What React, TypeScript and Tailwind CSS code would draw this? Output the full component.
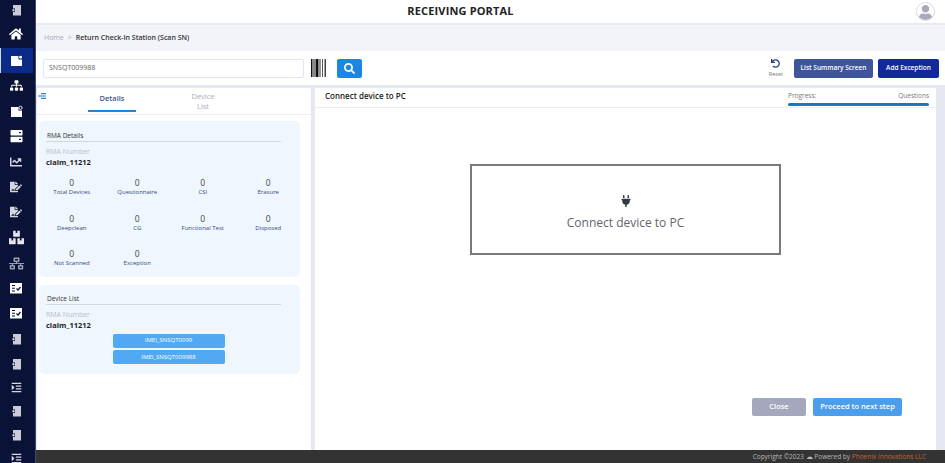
import type { ReactNode } from 'react'
import { FaHome, FaSitemap, FaChartLine, FaFileSignature, FaBoxes, FaSearch, FaUndo, FaPlug, FaIndent, FaUser, FaNetworkWired } from 'react-icons/fa'

function PanelIcon() {
  return (
    <svg width="14" height="14" viewBox="0 0 14 14">
      <rect x="4" y="2" width="8" height="10.5" fill="#c9cbd6" />
      <rect x="2.5" y="5.5" width="3.5" height="3.5" fill="#0a1238" />
      <rect x="3.5" y="6.3" width="2" height="2" fill="#e8e9ef" />
    </svg>
  )
}

function NoteIcon({ search }: { search?: boolean }) {
  return (
    <svg width="15" height="15" viewBox="0 0 15 15">
      <path d="M2 3h7.5v3.5H13V13H2z" fill="#fff" />
      {search ? (
        <circle cx="11.5" cy="3.8" r="1.6" fill="none" stroke="#fff" strokeWidth="0.9" />
      ) : (
        <circle cx="11.6" cy="4.2" r="1.4" fill="#fff" />
      )}
    </svg>
  )
}

function DrivesIcon() {
  return (
    <svg width="15" height="14" viewBox="0 0 15 14">
      <rect x="1.5" y="1" width="12" height="5.5" rx="0.8" fill="#fff" />
      <rect x="1.5" y="7.7" width="12" height="5.5" rx="0.8" fill="#fff" />
      <rect x="10" y="3" width="2" height="1.2" fill="#0a1238" />
      <rect x="10" y="9.8" width="2" height="1.2" fill="#0a1238" />
    </svg>
  )
}

function CheckListIcon() {
  return (
    <svg width="14" height="13" viewBox="0 0 14 13">
      <rect x="1" y="1" width="12" height="10.5" fill="#fff" />
      <path d="M3 3.5h3M3 6.2h3M3 9h3" stroke="#0a1238" strokeWidth="1.1" />
      <path d="M7.5 6.5l1.5 1.5 2.5-3" stroke="#0a1238" strokeWidth="1.2" fill="none" />
    </svg>
  )
}

function BarcodeIcon() {
  return (
    <svg width="16" height="18" viewBox="0 0 16 18" className="block">
      <rect x="0" y="0" width="1.5" height="18" fill="#111" />
      <rect x="2.5" y="0" width="1" height="18" fill="#111" />
      <rect x="4.5" y="0" width="3" height="18" fill="#111" />
      <rect x="8.5" y="0" width="1" height="18" fill="#333" />
      <rect x="11" y="0" width="1" height="18" fill="#555" />
      <rect x="13.5" y="0" width="1.5" height="18" fill="#444" />
    </svg>
  )
}

const sideIcons: ReactNode[] = [
  <PanelIcon />,
  <FaHome className="-mt-[3px] text-white text-[14px]" />,
  <NoteIcon />,
  <FaSitemap className="text-white text-[13px]" />,
  <NoteIcon search />,
  <DrivesIcon />,
  <FaChartLine className="text-[#d5d8e2] text-[12px]" />,
  <FaFileSignature className="text-[#d5d8e2] text-[12px]" />,
  <FaFileSignature className="text-[#d5d8e2] text-[12px]" />,
  <FaBoxes className="text-[#e4e6ee] text-[15px]" />,
  <FaNetworkWired className="text-[#9a9eb0] text-[15px]" />,
  <CheckListIcon />,
  <CheckListIcon />,
  <PanelIcon />,
  <PanelIcon />,
  <FaIndent className="text-[#d5d8e2] text-[11px]" />,
  <PanelIcon />,
  <PanelIcon />,
  <FaIndent className="text-[#d5d8e2] text-[11px]" />,
]

const stats = ['Total Devices', 'Questionnaire', 'CSI', 'Erasure', 'Deepclean', 'CG', 'Functional Test', 'Disposed', 'Not Scanned', 'Exception']

function CardTitle({ children }: { children: ReactNode }) {
  return <div className="ml-[7px] mr-[19px] border-b border-[#d3d7e4] pl-px text-[6.5px] leading-[10px] text-[#333] font-medium">{children}</div>
}

function RmaNumber() {
  return (
    <div className="ml-[7px] mt-[5px]">
      <div className="text-[7px] leading-[10px] text-[#b9bcc8]">RMA Number</div>
      <div className="text-[7.5px] leading-[11px] font-bold text-[#222]">claim_11212</div>
    </div>
  )
}

export default function App() {
  return (
    <div className="flex h-[463px] w-[945px] overflow-hidden bg-[#f3f4f9] font-['Open_Sans',sans-serif]">
      {/* Sidebar */}
      <div className="flex w-[36px] shrink-0 flex-col overflow-hidden border-r border-[#444b6a] bg-[#0a1238]">
        {sideIcons.map((icon, i) => (
          <div key={i} className={`flex shrink-0 items-center justify-center ${i >= 14 ? 'h-[23.7px]' : 'h-[25.35px]'} ${i === 0 ? '-mt-[3px]' : ''} ${i === 2 ? 'mr-[2px] border-l border-[#d7d9e2] bg-[#0c2a87] pr-[1px]' : 'pr-[3px]'}`}>
            {icon}
          </div>
        ))}
      </div>

      <div className="flex min-w-0 flex-1 flex-col">
        {/* Header */}
        <div className="relative flex h-[25px] shrink-0 items-center justify-center border-b-2 border-[#e9eaf0] bg-white pr-[60px]">
          <span className="text-[11px] font-bold tracking-[0.15px] text-[#222]">RECEIVING PORTAL</span>
          <div className="absolute right-[10px] top-[2px] flex h-[19px] w-[19px] items-end justify-center overflow-hidden rounded-full border border-[#d9dae2] bg-white">
            <FaUser className="text-[15px] text-[#a9abba]" />
          </div>
        </div>

        {/* Breadcrumb */}
        <div className="flex h-[26px] shrink-0 items-center pl-[8px] text-[7px] text-[#a5a8b8]">
          <span>Home</span>
          <span className="mx-[4px]">&gt;</span>
          <span className="font-semibold text-[#333]">Return Check-In Station (Scan SN)</span>
        </div>

        {/* Toolbar */}
        <div className="flex h-[34px] shrink-0 items-center bg-white pl-[7px] pr-[6px]">
          <div className="flex h-[19px] w-[261px] items-center rounded-[2px] border border-[#e2e5f5] pl-[5px] text-[7px] text-[#666]">SNSQT009988</div>
          <div className="ml-[7px]"><BarcodeIcon /></div>
          <div className="ml-[10px] flex h-[19px] w-[25px] items-center justify-center rounded-[2px] bg-[#1c86e0]">
            <FaSearch className="text-[11px] text-white" />
          </div>
          <div className="ml-auto mr-[11px] flex flex-col items-center">
            <FaUndo className="text-[9px] text-[#2a3a7a]" />
            <span className="mt-[3px] text-[5.5px] leading-[6px] text-[#777]">Reset</span>
          </div>
          <div className="flex h-[19px] w-[79px] items-center justify-center rounded-[2px] bg-[#3f5599] text-[6.5px] font-semibold text-white">List Summary Screen</div>
          <div className="ml-[5px] flex h-[19px] w-[61px] items-center justify-center rounded-[2px] bg-[#12299b] text-[6.5px] font-semibold text-white">Add Exception</div>
        </div>

        {/* Content */}
        <div className="flex min-h-0 flex-1 gap-[4px] bg-[#e6e8f1] pl-px pt-[3px] pr-[9px]">
          {/* Left panel */}
          <div className="relative flex w-[274px] shrink-0 flex-col bg-white">
            <svg width="8" height="6" viewBox="0 0 8 6" className="absolute left-[1px] top-[5px]">
              <path d="M3 .6h5M0 3h8M3 5.4h5" stroke="#2a7fd8" strokeWidth="1.1" />
            </svg>
            <div className="flex h-[27px] shrink-0 border-b border-[#ececf2]">
              <div className="ml-[51px] flex h-[24px] w-[48px] flex-col items-center justify-center border-b-2 border-[#1c86e0]">
                <span className="text-[7.5px] font-semibold text-[#3f5590]">Details</span>
              </div>
              <div className="ml-[47px] w-[40px] pt-[4px] text-center text-[7.5px] leading-[9.5px] text-[#a9acbc]">Device<br />List</div>
            </div>
            <div className="mt-[6px] ml-[2px] h-[156px] w-[261px] rounded-[5px] bg-[#f0f6fd] pt-[10px]">
              <CardTitle>RMA Details</CardTitle>
              <RmaNumber />
              <div className="mt-[9px] grid grid-cols-[65.5px_65.5px_65.5px_65.5px] gap-y-[15.5px]">
                {stats.map((s) => (
                  <div key={s} className="text-center">
                    <div className="text-[8.5px] leading-[11px] text-[#444]">0</div>
                    <div className="text-[6px] leading-[9px] whitespace-nowrap text-[#2f4a86]">{s}</div>
                  </div>
                ))}
              </div>
            </div>
            <div className="mt-[8px] ml-[2px] h-[89px] w-[261px] rounded-[5px] bg-[#f0f6fd] pt-[9px]">
              <CardTitle>Device List</CardTitle>
              <RmaNumber />
              <div className="mt-[3px] mr-[2px] flex flex-col items-center gap-[2.5px]">
                <div className="flex h-[13.5px] w-[112px] items-center justify-center rounded-[2px] bg-[#51a9f3] text-[6px] text-white">IMEI_SNSQT0099</div>
                <div className="flex h-[14px] w-[112px] items-center justify-center rounded-[2px] bg-[#51a9f3] text-[6px] text-white">IMEI_SNSQT009988</div>
              </div>
            </div>
          </div>

          {/* Right panel */}
          <div className="flex min-w-0 flex-1 flex-col bg-white">
            <div className="box-content flex h-[19px] shrink-0 items-start border-b border-[#ececf2] pl-[10px] pr-[7px]">
              <span className="pt-[2px] text-[8px] font-semibold text-[#222]">Connect device to PC</span>
              <div className="ml-auto w-[141px] pt-px">
                <div className="flex justify-between text-[6.5px] leading-[14px] text-[#777]">
                  <span>Progress:</span>
                  <span>Questions</span>
                </div>
                <div className="h-[3px] rounded-full bg-[#1b75d0]" />
              </div>
            </div>
            <div className="mt-[56px] ml-[155px] flex h-[91px] w-[311px] shrink-0 flex-col items-center justify-center border-2 border-[#7a7a7a] pt-[7px]">
              <FaPlug className="text-[12px] text-[#333a45]" />
              <span className="mt-[7px] text-[12px] text-[#5f6570]">Connect device to PC</span>
            </div>
            <div className="mt-[143px] ml-[437px] flex gap-[7px]">
              <div className="flex h-[18px] w-[54px] items-center justify-center rounded-[2px] bg-[#a5a8bc] text-[7.5px] font-semibold text-white">Close</div>
              <div className="flex h-[18px] w-[89px] items-center justify-center rounded-[2px] bg-[#4b9eec] text-[7.5px] font-semibold text-white">Proceed to next step</div>
            </div>
          </div>
        </div>

        {/* Footer */}
        <div className="flex h-[13px] shrink-0 items-center justify-end bg-[#333333] pr-[19px] text-[6.5px] text-[#b8b8b8]">
          <span>Copyright ©2023 ☁ Powered by <span className="text-[#c8602a]">Phoenix Innovations LLC</span></span>
        </div>
      </div>
    </div>
  )
}
